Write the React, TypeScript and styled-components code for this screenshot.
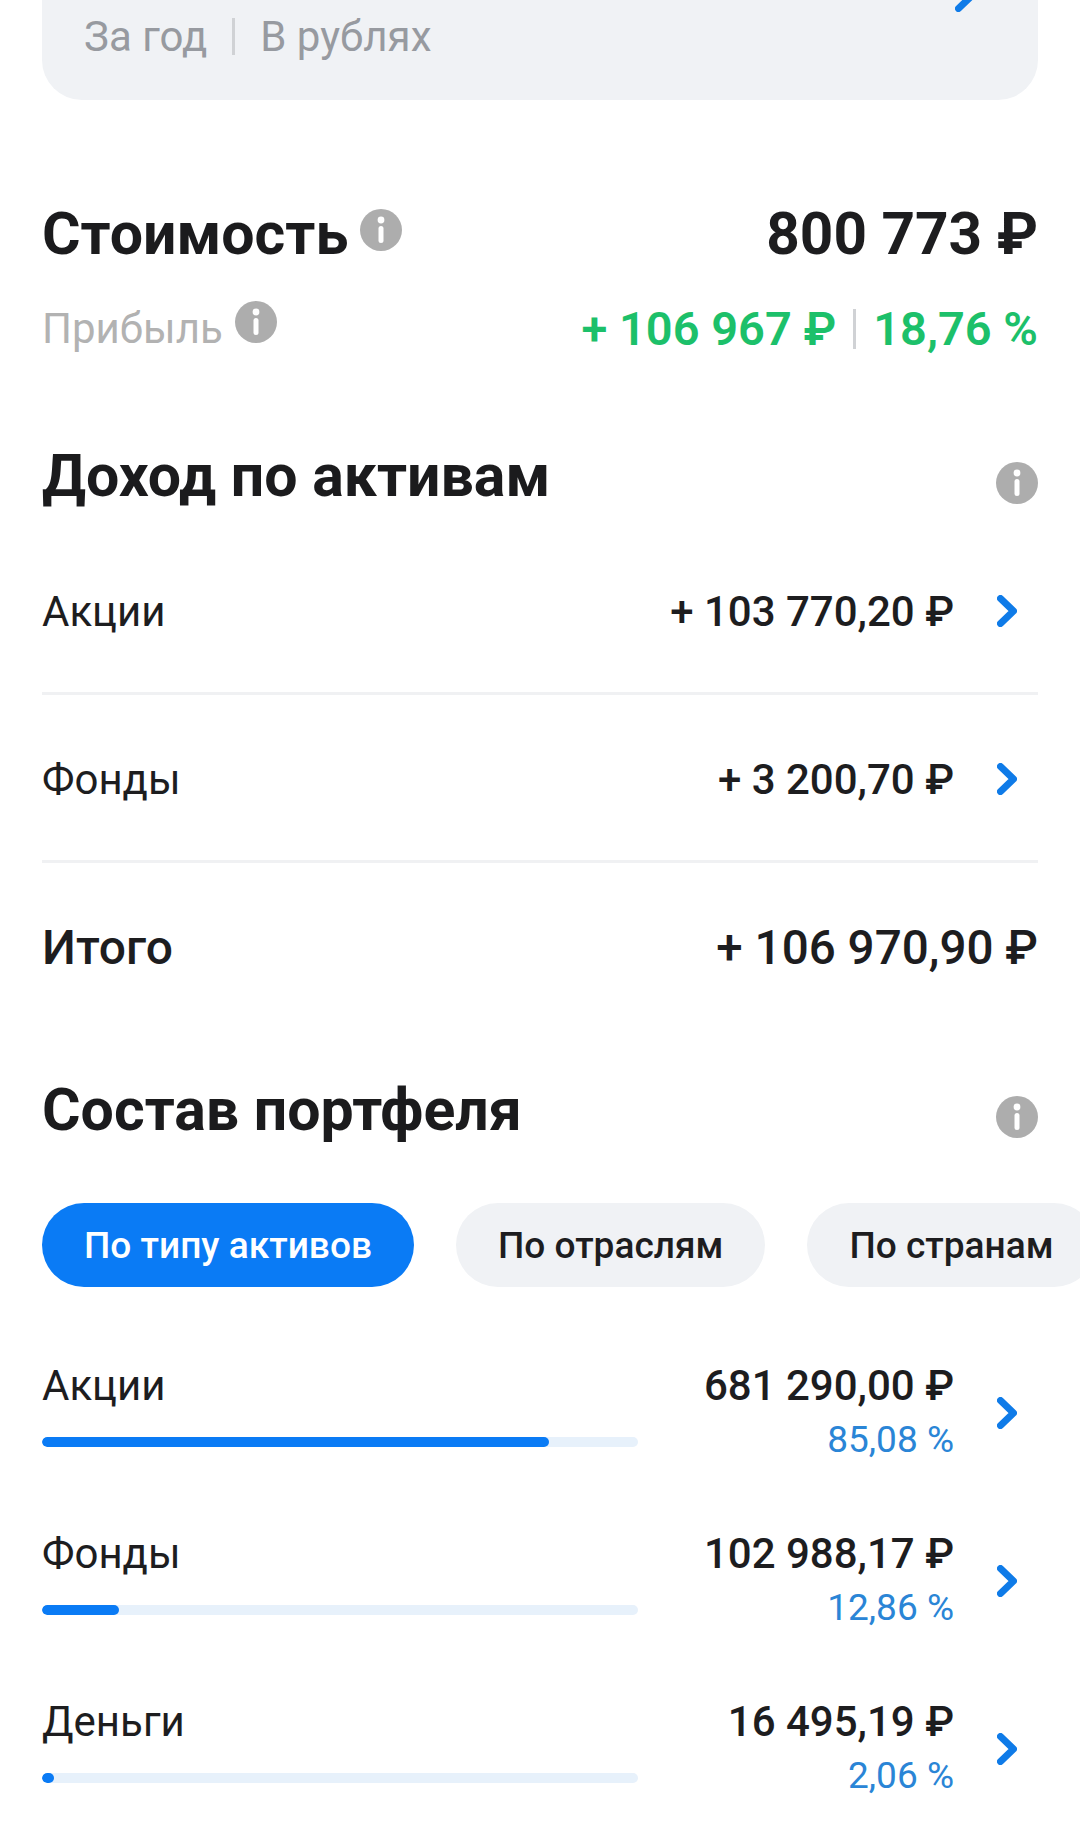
import React from "react";
import styled, { createGlobalStyle } from "styled-components";

const Global = createGlobalStyle`
  html, body { margin: 0; padding: 0; background: #fff; }
  body { font-family: Roboto, "Noto Sans", sans-serif; color: #1d1d1f; overflow: hidden; }
`;

const Page = styled.div`
  width: 1080px;
  height: 1840px;
  overflow: hidden;
  display: flex;
  flex-direction: column;
  padding: 0 42px;
  box-sizing: border-box;
`;

const Card = styled.div`
  flex: none;
  height: 200px;
  margin-top: -100px;
  background: #f0f2f5;
  border-radius: 0 0 40px 40px;
  padding: 100px 42px 0;
  box-sizing: border-box;
  display: flex;
  justify-content: space-between;
  align-items: flex-start;
`;

const CardMeta = styled.div`
  display: flex;
  align-items: center;
  gap: 25px;
  font-size: 42px;
  line-height: 36px;
  margin-top: 18px;
  color: #979aa0;
`;

const Sep = styled.span<{ $h: number }>`
  width: 3px;
  height: ${(p) => p.$h}px;
  background: #d0d2d5;
  flex: none;
`;

const CardChevron = styled.svg`
  width: 20px;
  height: 32px;
  margin: -20px 21px 0 0;
`;

const SummaryRow = styled.div<{ $top: number }>`
  display: flex;
  justify-content: space-between;
  align-items: center;
  margin-top: ${(p) => p.$top}px;
`;

const Left = styled.div`
  display: flex;
  align-items: flex-start;
  gap: 12px;
`;

const Title = styled.h2`
  margin: 0;
  font-size: 59px;
  line-height: 66px;
  font-weight: 700;
  color: #1b1b1d;
`;

const BigValue = styled.div`
  font-size: 58.5px;
  line-height: 66px;
  font-weight: 700;
`;

const MutedLabel = styled.div`
  font-size: 42px;
  line-height: 48px;
  color: #b2b2b2;
`;

const Gain = styled.div`
  display: flex;
  align-items: center;
  gap: 17px;
  font-size: 47px;
  line-height: 54px;
  font-weight: 600;
  color: #1cc06a;
`;

const SectionHead = styled.div<{ $top: number }>`
  display: flex;
  justify-content: space-between;
  align-items: center;
  margin-top: ${(p) => p.$top}px;
`;

const InfoSvg = styled.svg<{ $mt?: number }>`
  width: 42px;
  height: 42px;
  flex: none;
  margin-top: ${(p) => p.$mt ?? 0}px;
`;

const Info = ({ mt }: { mt?: number }) => (
  <InfoSvg $mt={mt} viewBox="0 0 42 42">
    <circle cx="21" cy="21" r="21" fill="#adadad" />
    <circle cx="21" cy="11" r="3.4" fill="#fff" />
    <rect x="18.5" y="17" width="5" height="17" rx="2.5" fill="#fff" />
  </InfoSvg>
);

const ChevronSvg = styled.svg`
  width: 20px;
  height: 32px;
  flex: none;
`;

const ChevronPath = () => (
  <path d="M3.5 3.5 L16.5 16 L3.5 28.5" fill="none" stroke="#0f7be8" strokeWidth="7" strokeLinecap="round" strokeLinejoin="round" />
);

const Chevron = () => (
  <ChevronSvg viewBox="0 0 20 32">
    <ChevronPath />
  </ChevronSvg>
);

const IncomeList = styled.div`
  margin-top: 18px;
`;

const IncomeRow = styled.div<{ $divider?: boolean }>`
  height: 168px;
  box-sizing: border-box;
  display: flex;
  align-items: center;
  justify-content: space-between;
  padding-top: ${(p) => (p.$divider ? 3 : 1)}px;
  border-bottom: ${(p) => (p.$divider ? "3px solid #f0f1f3" : "none")};
  font-size: 42px;
`;

const IncomeRight = styled.div`
  display: flex;
  align-items: center;
  gap: 43px;
  padding-right: 21px;
  font-weight: 500;
`;

const TotalLabel = styled.div`
  font-size: 48px;
  font-weight: 500;
`;

const TotalValue = styled.div`
  font-size: 47.6px;
  font-weight: 500;
`;

const Chips = styled.div`
  display: flex;
  gap: 42px;
  margin-top: 60px;
  width: 1200px;
`;

const Chip = styled.div<{ $active?: boolean }>`
  height: 84px;
  padding: 0 42px;
  border-radius: 42px;
  display: flex;
  align-items: center;
  font-size: 37.1px;
  font-weight: 500;
  white-space: nowrap;
  background: ${(p) => (p.$active ? "#0a7bf5" : "#f0f2f5")};
  color: ${(p) => (p.$active ? "#fff" : "#1d1d1f")};
`;

const Assets = styled.div`
  display: flex;
  flex-direction: column;
  gap: 46px;
  margin-top: 65px;
`;

const AssetRow = styled.div`
  display: flex;
  align-items: flex-start;
  height: 122px;
`;

const AssetMain = styled.div`
  width: 596px;
  margin-top: 10px;
  display: flex;
  flex-direction: column;
  gap: 27px;
  font-size: 42px;
  line-height: 48px;
`;

const Track = styled.div`
  height: 10px;
  border-radius: 5px;
  background: #e7f1fb;
  overflow: hidden;
`;

const Fill = styled.div`
  height: 100%;
  border-radius: 5px;
  background: #0a7bf5;
`;

const AssetAmounts = styled.div`
  flex: 1;
  margin-top: 10px;
  display: flex;
  flex-direction: column;
  align-items: flex-end;
  gap: 6px;
`;

const Amount = styled.div`
  font-size: 42px;
  line-height: 48px;
  font-weight: 500;
`;

const Percent = styled.div`
  font-size: 37px;
  line-height: 48px;
  color: #2a85d6;
`;

const AssetChevron = styled.div`
  align-self: center;
  margin: 0 21px 0 43px;
  display: flex;
`;

const assets = [
  { n: "Акции", a: "681 290,00 ₽", p: "85,08 %", w: 85 },
  { n: "Фонды", a: "102 988,17 ₽", p: "12,86 %", w: 12.86 },
  { n: "Деньги", a: "16 495,19 ₽", p: "2,06 %", w: 2.06 },
];

export default function App() {
  return (
    <Page>
      <Global />
      <Card>
        <CardMeta>
          <span>За год</span>
          <Sep $h={37} />
          <span>В рублях</span>
        </CardMeta>
        <CardChevron viewBox="0 0 20 32">
          <ChevronPath />
        </CardChevron>
      </Card>

      <SummaryRow $top={101}>
        <Left>
          <Title>Стоимость</Title>
          <Info mt={8} />
        </Left>
        <BigValue>800 773 ₽</BigValue>
      </SummaryRow>
      <SummaryRow $top={35}>
        <Left>
          <MutedLabel>Прибыль</MutedLabel>
          <Info mt={-4} />
        </Left>
        <Gain>
          <span>+ 106 967 ₽</span>
          <Sep $h={40} />
          <span>18,76 %</span>
        </Gain>
      </SummaryRow>

      <SectionHead $top={87}>
        <Title>Доход по активам</Title>
        <Info mt={13} />
      </SectionHead>
      <IncomeList>
        <IncomeRow $divider>
          <span>Акции</span>
          <IncomeRight>
            + 103 770,20 ₽
            <Chevron />
          </IncomeRight>
        </IncomeRow>
        <IncomeRow $divider>
          <span>Фонды</span>
          <IncomeRight>
            + 3 200,70 ₽
            <Chevron />
          </IncomeRight>
        </IncomeRow>
        <IncomeRow>
          <TotalLabel>Итого</TotalLabel>
          <TotalValue>+ 106 970,90 ₽</TotalValue>
        </IncomeRow>
      </IncomeList>

      <SectionHead $top={46}>
        <Title>Состав портфеля</Title>
        <Info mt={13} />
      </SectionHead>
      <Chips>
        <Chip $active>По типу активов</Chip>
        <Chip>По отраслям</Chip>
        <Chip>По странам</Chip>
      </Chips>
      <Assets>
        {assets.map((x) => (
          <AssetRow key={x.n}>
            <AssetMain>
              <span>{x.n}</span>
              <Track>
                <Fill style={{ width: `${x.w}%` }} />
              </Track>
            </AssetMain>
            <AssetAmounts>
              <Amount>{x.a}</Amount>
              <Percent>{x.p}</Percent>
            </AssetAmounts>
            <AssetChevron>
              <Chevron />
            </AssetChevron>
          </AssetRow>
        ))}
      </Assets>
    </Page>
  );
}
